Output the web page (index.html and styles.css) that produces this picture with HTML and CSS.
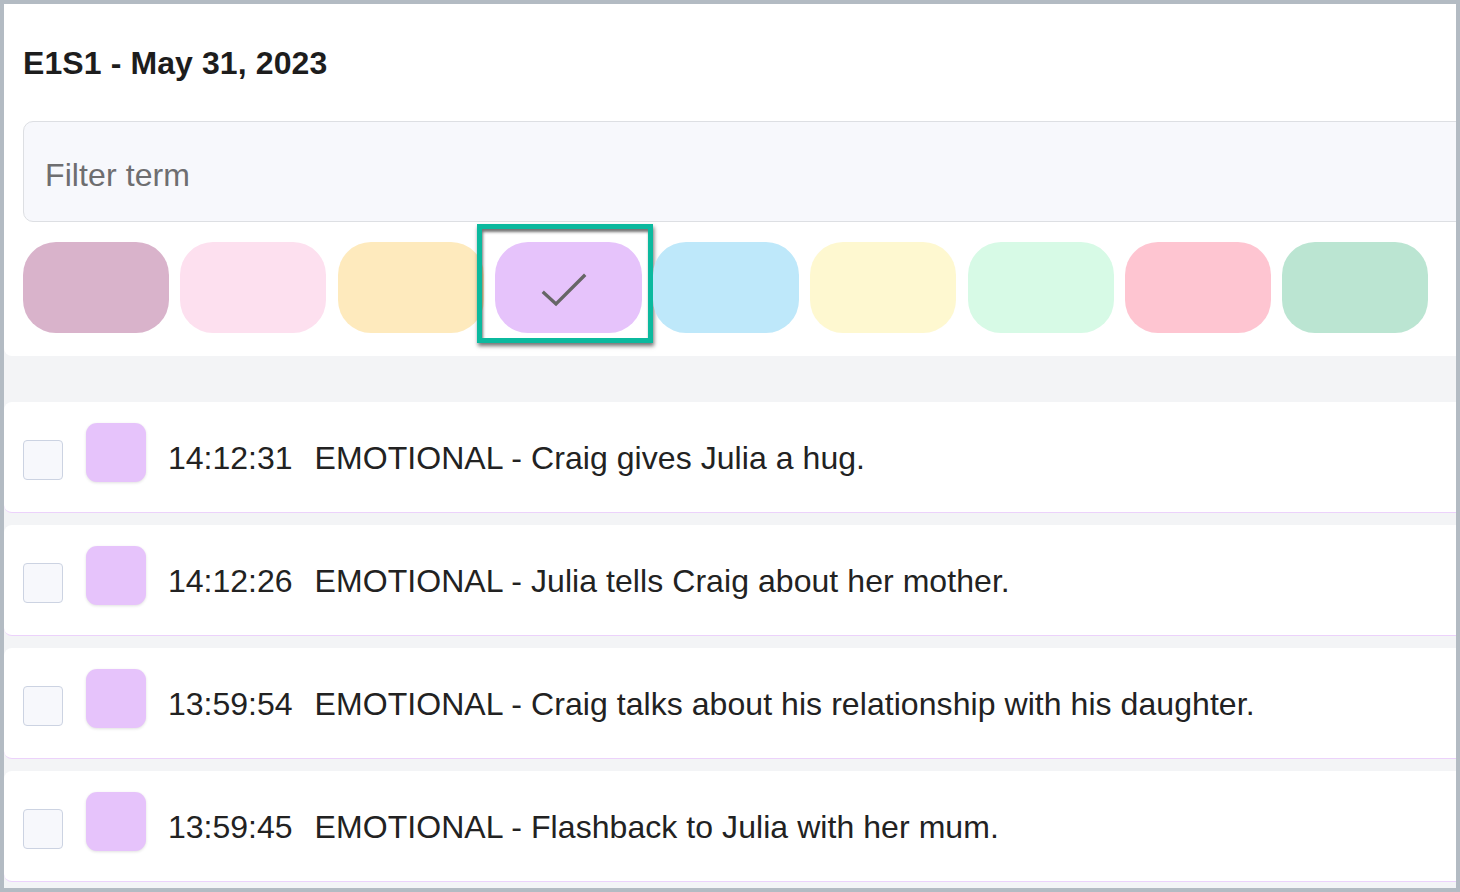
FILE: index.html
```html
<!DOCTYPE html>
<html lang="en">
<head>
<meta charset="utf-8">
<title>E1S1 - May 31, 2023</title>
<link rel="stylesheet" href="styles.css">
</head>
<body>
<div class="app">
  <div class="content">
    <section class="panel">
      <h1 class="title">E1S1 - May 31, 2023</h1>
      <input class="filter" type="text" placeholder="Filter term">
      <div class="swatches">
        <button class="swatch c1"></button>
        <button class="swatch c2"></button>
        <button class="swatch c3"></button>
        <button class="swatch c4 selected">
          <svg class="check" viewBox="0 0 147 91" aria-hidden="true"><path d="M49 51 L61 62 L89 34" fill="none" stroke="#666" stroke-width="3.4" stroke-linecap="square"/></svg>
          <span class="ring"></span>
        </button>
        <button class="swatch c5"></button>
        <button class="swatch c6"></button>
        <button class="swatch c7"></button>
        <button class="swatch c8"></button>
        <button class="swatch c9"></button>
      </div>
    </section>
    <div class="band"></div>
    <ul class="rows">
      <li class="row">
        <span class="box"></span>
        <span class="tag"></span>
        <span class="time">14:12:31</span>
        <span class="desc">EMOTIONAL - Craig gives Julia a hug.</span>
      </li>
      <li class="row">
        <span class="box"></span>
        <span class="tag"></span>
        <span class="time">14:12:26</span>
        <span class="desc">EMOTIONAL - Julia tells Craig about her mother.</span>
      </li>
      <li class="row">
        <span class="box"></span>
        <span class="tag"></span>
        <span class="time">13:59:54</span>
        <span class="desc">EMOTIONAL - Craig talks about his relationship with his daughter.</span>
      </li>
      <li class="row">
        <span class="box"></span>
        <span class="tag"></span>
        <span class="time">13:59:45</span>
        <span class="desc">EMOTIONAL - Flashback to Julia with her mum.</span>
      </li>
    </ul>
  </div>
</div>
</body>
</html>
```

FILE: styles.css
```css
* { box-sizing: border-box; }

html, body {
  margin: 0;
  padding: 0;
}

body {
  background: #b3bbc3;
  padding: 4px 4px 4px 4px;
  font-family: "Liberation Sans", Arial, Helvetica, sans-serif;
  color: #222;
}

.app {
  width: 1452px;
  height: 884px;
  overflow: hidden;
  background: #f3f4f6;
}

.content {
  width: 1520px;
}

.panel {
  background: #fff;
  border-radius: 0 0 8px 8px;
  padding: 41px 0 23px 19px;
}

.title {
  margin: 0;
  font-size: 32px;
  line-height: 37px;
  font-weight: 700;
  color: #1d1d1d;
  letter-spacing: 0.1px;
}

.filter {
  display: block;
  margin-top: 39px;
  width: 1480px;
  height: 101px;
  border: 1px solid #dddfe3;
  border-radius: 10px;
  background: #f7f8fc;
  padding: 8px 0 0 21px;
  font-family: inherit;
  font-size: 32px;
  letter-spacing: 0.1px;
  color: #333;
  outline: none;
}

.filter::placeholder {
  color: #6e6e70;
}

.swatches {
  display: flex;
  gap: 11.3px;
  margin-top: 20px;
}

.swatch {
  position: relative;
  flex: 0 0 146px;
  height: 91px;
  border: none;
  padding: 0;
  border-radius: 33px;
  cursor: pointer;
}

.check {
  display: block;
  width: 100%;
  height: 100%;
}

.c1 { background: #d9b3cb; }
.c2 { background: #fde0ef; }
.c3 { background: #feeabd; }
.c4 { background: #e6c3fb; flex-basis: 147px; }
.c5 { background: #bee8fa; }
.c6 { background: #fef8d0; }
.c7 { background: #d7fae6; }
.c8 { background: #fec5d1; }
.c9 { background: #bbe5d2; }

.ring {
  position: absolute;
  left: -18px;
  right: -11px;
  top: -18px;
  bottom: -10px;
  border: 5px solid #0bb99e;
  box-shadow: 1px 3px 4px rgba(0, 0, 0, 0.55), inset 1px 3px 3px rgba(0, 0, 0, 0.55);
  pointer-events: none;
}

.band {
  height: 46px;
}

.rows {
  list-style: none;
  margin: 0;
  padding: 0;
  display: flex;
  flex-direction: column;
  gap: 12px;
}

.row {
  display: flex;
  align-items: center;
  height: 111px;
  background: #fff;
  border-radius: 8px;
  border-bottom: 1px solid #ecd2fb;
  padding: 0 0 0 19px;
  font-size: 32px;
  color: #222;
}

.box {
  flex: 0 0 40px;
  height: 40px;
  border: 1px solid #ccd3e2;
  border-radius: 4px;
  background: #f7f8fc;
  margin-top: 6px;
}

.tag {
  flex: 0 0 60px;
  height: 59px;
  margin-left: 23px;
  margin-bottom: 9px;
  border-radius: 11px;
  background: #e6c3fb;
  box-shadow: 0 1px 3px rgba(0, 0, 0, 0.12);
}

.time {
  margin-left: 22px;
  line-height: 37px;
  padding-top: 2px;
}

.desc {
  margin-left: 22px;
  line-height: 37px;
  padding-top: 2px;
  letter-spacing: 0.06px;
}
```
